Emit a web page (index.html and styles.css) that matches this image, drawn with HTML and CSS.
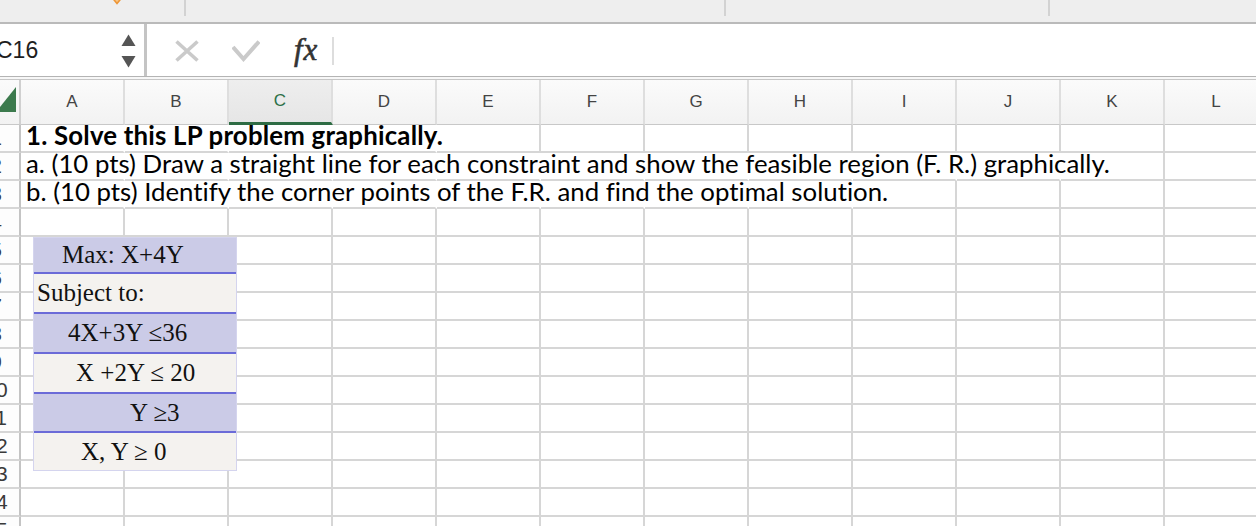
FILE: index.html
```html
<!DOCTYPE html>
<html>
<head>
<meta charset="utf-8">
<link rel="stylesheet" href="styles.css">
</head>
<body>
<div class="app">
  <div class="topband">
    <div class="seg seg1">
      <svg class="diamond" width="16" height="6" viewBox="0 0 16 6"><polygon points="1,-5 8,3.5 15,-5" fill="#f8c684" stroke="#ee9637" stroke-width="1.6"/></svg>
    </div>
    <div class="seg seg2"></div>
    <div class="seg seg3"></div>
  </div>
  <div class="fbar">
    <div class="namebox">
      <span class="ref">C16</span>
      <svg class="spin" width="15" height="34" viewBox="0 0 15 34"><polygon points="0.5,12 7.5,0.5 14.5,12" fill="#555"/><polygon points="0.5,22 14.5,22 7.5,33.5" fill="#555"/></svg>
    </div>
    <div class="fbtns">
      <svg class="xbtn" width="24" height="22" viewBox="0 0 24 22"><path d="M1.5 1.5 L22.5 20.5 M22.5 1.5 L1.5 20.5" stroke="#cacaca" stroke-width="3.6" fill="none"/></svg>
      <svg class="okbtn" width="28" height="22" viewBox="0 0 28 22"><path d="M1 7 L11.5 19 L27 1.5" stroke="#cacaca" stroke-width="4" fill="none"/></svg>
      <span class="fx">fx</span>
      <span class="fsep"></span>
    </div>
    <div class="finput"></div>
  </div>
  <div class="dbl"></div>
  <div class="sheet">
    <div class="grid">
      <div class="corner"><svg class="selall" width="21" height="44" viewBox="0 0 21 44"><polygon points="16,7 16,32 -4,32" fill="#3c7a4d"/></svg></div>
      <div class="ch">A</div><div class="ch">B</div><div class="ch sel">C</div><div class="ch">D</div><div class="ch">E</div><div class="ch">F</div><div class="ch">G</div><div class="ch">H</div><div class="ch">I</div><div class="ch">J</div><div class="ch">K</div><div class="ch">L</div>

      <div class="rh"><span>1</span></div>
      <div class="c nob"><b>1. Solve this LP problem graphically.</b></div><div class="c nob"></div><div class="c nob"></div><div class="c nob"></div><div class="c"></div><div class="c"></div><div class="c"></div><div class="c"></div><div class="c"></div><div class="c"></div><div class="c"></div><div class="c"></div>

      <div class="rh"><span>2</span></div>
      <div class="c nob">a. (10 pts) Draw a straight line for each constraint and show the feasible region (F. R.) graphically.</div><div class="c nob"></div><div class="c nob"></div><div class="c nob"></div><div class="c nob"></div><div class="c nob"></div><div class="c nob"></div><div class="c nob"></div><div class="c nob"></div><div class="c nob"></div><div class="c"></div><div class="c"></div>

      <div class="rh"><span>3</span></div>
      <div class="c nob">b. (10 pts) Identify the corner points of the F.R. and find the optimal solution.</div><div class="c nob"></div><div class="c nob"></div><div class="c nob"></div><div class="c nob"></div><div class="c nob"></div><div class="c nob"></div><div class="c nob"></div><div class="c"></div><div class="c"></div><div class="c"></div><div class="c"></div>

      <div class="rh"><span>4</span></div>
      <div class="c"></div><div class="c"></div><div class="c"></div><div class="c"></div><div class="c"></div><div class="c"></div><div class="c"></div><div class="c"></div><div class="c"></div><div class="c"></div><div class="c"></div><div class="c"></div>
      <div class="rh"><span>5</span></div>
      <div class="c"></div><div class="c"></div><div class="c"></div><div class="c"></div><div class="c"></div><div class="c"></div><div class="c"></div><div class="c"></div><div class="c"></div><div class="c"></div><div class="c"></div><div class="c"></div>
      <div class="rh"><span>6</span></div>
      <div class="c"></div><div class="c"></div><div class="c"></div><div class="c"></div><div class="c"></div><div class="c"></div><div class="c"></div><div class="c"></div><div class="c"></div><div class="c"></div><div class="c"></div><div class="c"></div>
      <div class="rh"><span>7</span></div>
      <div class="c"></div><div class="c"></div><div class="c"></div><div class="c"></div><div class="c"></div><div class="c"></div><div class="c"></div><div class="c"></div><div class="c"></div><div class="c"></div><div class="c"></div><div class="c"></div>
      <div class="rh"><span>8</span></div>
      <div class="c"></div><div class="c"></div><div class="c"></div><div class="c"></div><div class="c"></div><div class="c"></div><div class="c"></div><div class="c"></div><div class="c"></div><div class="c"></div><div class="c"></div><div class="c"></div>
      <div class="rh"><span>9</span></div>
      <div class="c"></div><div class="c"></div><div class="c"></div><div class="c"></div><div class="c"></div><div class="c"></div><div class="c"></div><div class="c"></div><div class="c"></div><div class="c"></div><div class="c"></div><div class="c"></div>
      <div class="rh"><span>10</span></div>
      <div class="c"></div><div class="c"></div><div class="c"></div><div class="c"></div><div class="c"></div><div class="c"></div><div class="c"></div><div class="c"></div><div class="c"></div><div class="c"></div><div class="c"></div><div class="c"></div>
      <div class="rh"><span>11</span></div>
      <div class="c"></div><div class="c"></div><div class="c"></div><div class="c"></div><div class="c"></div><div class="c"></div><div class="c"></div><div class="c"></div><div class="c"></div><div class="c"></div><div class="c"></div><div class="c"></div>
      <div class="rh"><span>12</span></div>
      <div class="c"></div><div class="c"></div><div class="c"></div><div class="c"></div><div class="c"></div><div class="c"></div><div class="c"></div><div class="c"></div><div class="c"></div><div class="c"></div><div class="c"></div><div class="c"></div>
      <div class="rh"><span>13</span></div>
      <div class="c"></div><div class="c"></div><div class="c"></div><div class="c"></div><div class="c"></div><div class="c"></div><div class="c"></div><div class="c"></div><div class="c"></div><div class="c"></div><div class="c"></div><div class="c"></div>
      <div class="rh"><span>14</span></div>
      <div class="c"></div><div class="c"></div><div class="c"></div><div class="c"></div><div class="c"></div><div class="c"></div><div class="c"></div><div class="c"></div><div class="c"></div><div class="c"></div><div class="c"></div><div class="c"></div>
      <div class="rh"><span>15</span></div>
      <div class="c"></div><div class="c"></div><div class="c"></div><div class="c"></div><div class="c"></div><div class="c"></div><div class="c"></div><div class="c"></div><div class="c"></div><div class="c"></div><div class="c"></div><div class="c"></div>
    </div>

    <div class="lp">
      <div class="lpr p r1"><span class="t1">Max: X+4Y</span></div>
      <div class="lpr l r2"><span class="t2">Subject to:</span></div>
      <div class="lpr p r3"><span class="t3">4X+3Y ≤36</span></div>
      <div class="lpr l r4"><span class="t4">X +2Y ≤ 20</span></div>
      <div class="lpr p r5"><span class="t5">Y ≥3</span></div>
      <div class="lpr l r6"><span class="t6">X, Y ≥ 0</span></div>
    </div>
  </div>
</div>
</body>
</html>
```

FILE: styles.css
```css
html, body {
  margin: 0;
  padding: 0;
  background: #ffffff;
}
body {
  width: 1256px;
  height: 526px;
  overflow: hidden;
}
.app {
  width: 1256px;
  height: 526px;
  overflow: hidden;
}

/* top ribbon tail */
.topband {
  height: 22px;
  background: #eeeeee;
  border-bottom: 2px solid #bababa;
  display: flex;
  align-items: flex-start;
}
.seg {
  height: 16px;
  border-right: 2px solid #d2d2d2;
  flex: none;
}
.seg1 { width: 184px; display: flex; align-items: flex-start; }
.seg2 { width: 538px; }
.seg3 { width: 322px; }
.diamond { margin-left: 109px; display: block; }

/* formula bar */
.fbar {
  height: 52px;
  display: flex;
  align-items: stretch;
  background: #ffffff;
  border-bottom: 1px solid #b4b4b4;
}
.namebox {
  width: 136px;
  border-right: 3px solid #c4c4c4;
  display: flex;
  align-items: center;
  justify-content: space-between;
  padding-right: 8px;
  flex: none;
}
.ref {
  font-family: "Liberation Sans", Arial, sans-serif;
  font-size: 23px;
  color: #1e1e1e;
  margin-left: -4px;
  margin-top: 1px;
}
.spin { display: block; margin-top: 1px; }
.fbtns {
  display: flex;
  align-items: center;
  flex: none;
}
.xbtn { display: block; margin-left: 28px; margin-top: 1px; }
.okbtn { display: block; margin-left: 33px; margin-top: 2px; }
.fx {
  font-family: "Liberation Serif", "Times New Roman", serif;
  font-style: italic;
  font-size: 31px;
  line-height: 30px;
  color: #333333;
  margin-left: 34px;
  letter-spacing: 1px;
  -webkit-text-stroke: 0.6px #333333;
}
.fsep {
  width: 2px;
  height: 28px;
  background: #dddddd;
  margin-left: 14px;
  margin-top: 2px;
}
.finput { flex: 1; }
.dbl {
  height: 2px;
  background: #f7f7f7;
  border-bottom: 1px solid #c6c6c6;
}

/* sheet */
.sheet {
  position: relative;
}
.grid {
  display: grid;
  grid-template-columns: 21px repeat(12, 104px);
  grid-template-rows: 45px;
  grid-auto-rows: 28px;
  width: 1269px;
}
.grid > div { box-sizing: border-box; }
.corner {
  background: linear-gradient(#fbfbfb, #f2f2f2);
  border-right: 2px solid #d0d0d0;
  border-bottom: 1px solid #c8c8c8;
  overflow: hidden;
}
.selall { display: block; }
.ch {
  background: linear-gradient(#fbfbfb, #f2f2f2);
  border-right: 2px solid #dedede;
  border-bottom: 1px solid #c8c8c8;
  font-family: "Liberation Sans", Arial, sans-serif;
  font-size: 17px;
  color: #444444;
  display: flex;
  align-items: center;
  justify-content: center;
  padding-bottom: 1px;
}
.ch.sel {
  background: linear-gradient(#eeeeee, #e6e6e6);
  border-bottom: 3px solid #2e6c44;
  color: #2d7048;
  padding-bottom: 0;
}
.rh {
  border-right: 2px solid #c4c4c4;
  border-bottom: 2px solid #d6d6d6;
  background: #fdfdfd;
  font-family: "Liberation Sans", Arial, sans-serif;
  font-size: 21px;
  line-height: 26px;
  color: #3a3a3a;
  overflow: hidden;
}
.rh span {
  display: block;
  width: 36px;
  margin-left: -22px;
  text-align: center;
}
.c {
  border-right: 2px solid #d6d6d6;
  border-bottom: 2px solid #d6d6d6;
  font-family: Lato, "Open Sans", sans-serif;
  font-size: 25.8px;
  line-height: 19px;
  color: #000000;
  white-space: nowrap;
  padding-left: 5px;
  padding-top: 1px;
  font-variant-ligatures: none;
  font-feature-settings: "liga" 0, "clig" 0;
}
.c.nob { border-right-color: transparent; }
.c b { font-weight: 700; letter-spacing: 0.2px; }

/* pasted picture of the LP model */
.lp {
  position: absolute;
  left: 33px;
  top: 157px;
  width: 204px;
  height: 234px;
  box-sizing: border-box;
  border: 1px solid #d4d4ee;
  display: flex;
  flex-direction: column;
  font-family: "Liberation Serif", "Times New Roman", serif;
  font-size: 25px;
  color: #111111;
  background: #f4f2ef;
}
.lpr {
  display: flex;
  align-items: center;
  box-sizing: border-box;
  white-space: nowrap;
  border-bottom: 2px solid #6b6bd8;
  flex: none;
}
.lpr.p { background: #cbcbe7; }
.lpr.l { background: #f4f2ef; }
.r1 { height: 36px; }
.r2 { height: 40px; }
.r3 { height: 40px; }
.r4 { height: 40px; }
.r5 { height: 39px; }
.r6 { height: 37px; border-bottom: none; }
.t1 { padding-left: 28px; }
.t2 { padding-left: 3px; }
.t3 { padding-left: 34px; }
.t4 { padding-left: 42px; }
.t5 { padding-left: 96px; }
.t6 { padding-left: 47px; }
```
